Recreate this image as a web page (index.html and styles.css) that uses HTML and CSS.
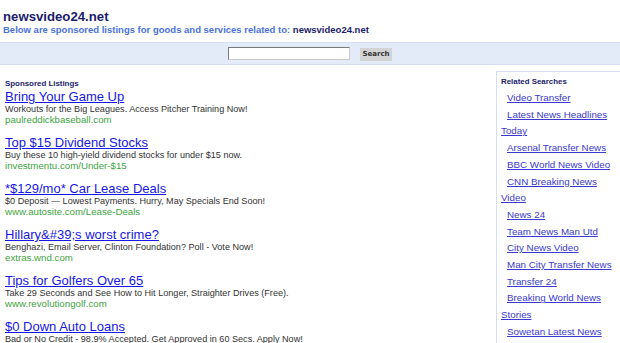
FILE: index.html
```html
<!DOCTYPE html>
<html>
	<head>
		<meta charset="utf-8" />
		<title>newsvideo24.net</title>
	<link rel="stylesheet" href="styles.css">
	</head>
	<body>
	<div class="header">
		<h1>newsvideo24.net</h1>
		<p class="intro">Below are sponsored listings for goods and services related to: <span class="domain">newsvideo24.net</span></p>
	</div>
	<div class="searchbar">
		<input type="text" class="query">
		<button class="go">Search</button>
	</div>
	<div class="main">
		<div class="listings">
			<div class="heading">Sponsored Listings</div>
			<div class="ad">
				<a href="#">Bring Your Game Up</a>
				<div class="desc">Workouts for the Big Leagues. Access Pitcher Training Now!</div>
				<div class="url">paulreddickbaseball.com</div>
			</div>
			<div class="ad">
				<a href="#">Top $15 Dividend Stocks</a>
				<div class="desc">Buy these 10 high-yield dividend stocks for under $15 now.</div>
				<div class="url">investmentu.com/Under-$15</div>
			</div>
			<div class="ad">
				<a href="#">*$129/mo* Car Lease Deals</a>
				<div class="desc">$0 Deposit &mdash; Lowest Payments. Hurry, May Specials End Soon!</div>
				<div class="url">www.autosite.com/Lease-Deals</div>
			</div>
			<div class="ad">
				<a href="#">Hillary&amp;#39;s worst crime?</a>
				<div class="desc">Benghazi, Email Server, Clinton Foundation? Poll - Vote Now!</div>
				<div class="url">extras.wnd.com</div>
			</div>
			<div class="ad">
				<a href="#">Tips for Golfers Over 65</a>
				<div class="desc">Take 29 Seconds and See How to Hit Longer, Straighter Drives (Free).</div>
				<div class="url">www.revolutiongolf.com</div>
			</div>
			<div class="ad">
				<a href="#">$0 Down Auto Loans</a>
				<div class="desc">Bad or No Credit - 98.9% Accepted. Get Approved in 60 Secs. Apply Now!</div>
				<div class="url">www.autoloans.com</div>
			</div>
		</div>
		<div class="related">
			<div class="heading">Related Searches</div>
			<a class="sub" href="#">Video Transfer</a>
			<a class="sub" href="#">Latest News Headlines</a>
			<a class="cat" href="#">Today</a>
			<a class="sub" href="#">Arsenal Transfer News</a>
			<a class="sub" href="#">BBC World News Video</a>
			<a class="sub" href="#">CNN Breaking News</a>
			<a class="cat" href="#">Video</a>
			<a class="sub" href="#">News 24</a>
			<a class="sub" href="#">Team News Man Utd</a>
			<a class="sub" href="#">City News Video</a>
			<a class="sub" href="#">Man City Transfer News</a>
			<a class="sub" href="#">Transfer 24</a>
			<a class="sub" href="#">Breaking World News</a>
			<a class="cat" href="#">Stories</a>
			<a class="sub" href="#">Sowetan Latest News</a>
		</div>
	</div>
	</body>
</html>
```

FILE: styles.css
```css
body{
	margin: 0;
	font-family: "Liberation Sans", Arial, sans-serif;
	background: #fff;
	overflow: hidden;
}
.header{
	padding: 10px 0 0 3px;
	height: 32px;
}
h1{
	margin: 0;
	font-size: 13.2px;
	line-height: 14px;
	color: #1c1c6a;
}
.intro{
	margin: 0;
	font-size: 9.5px;
	font-weight: bold;
	line-height: 12px;
	color: #4b72de;
}
.domain{
	color: #1c1c6a;
}
.searchbar{
	height: 21px;
	background: #e4ebf8;
	border-top: 1px solid #d3def3;
	border-bottom: 1px solid #d3def3;
	display: flex;
	justify-content: center;
	align-items: center;
	gap: 10px;
}
.query{
	width: 118px;
	height: 9px;
	padding: 1px;
	margin: 0;
	border: 1px solid #777;
	border-right-color: #ccc;
	border-bottom-color: #ccc;
	background: #fff;
}
.go{
	width: 32px;
	height: 13px;
	padding: 0;
	margin: 1px 0 0 0;
	border: 0;
	background: #d4d4d4;
	font-family: "DejaVu Sans", sans-serif;
	font-size: 7px;
	font-weight: bold;
	color: #333;
}
.main{
	display: flex;
	padding-top: 6px;
}
.listings{
	flex: 1;
	padding: 8px 0 0 5px;
}
.heading{
	font-size: 7.9px;
	font-weight: bold;
	color: #1c1c6a;
	line-height: 10px;
}
.ad{
	margin-bottom: 11px;
}
.ad a{
	display: block;
	font-size: 13px;
	line-height: 14px;
	color: #1717e6;
	margin-top: 1px;
}
.desc{
	font-size: 9.1px;
	line-height: 11px;
	color: #333;
}
.url{
	font-size: 9.7px;
	line-height: 10px;
	color: #3fa33f;
}
.related{
	width: 119px;
	padding: 5px 0 0 4px;
	border-left: 1px solid #d3def3;
	border-top: 1px solid #d3def3;
}
.related .heading{
	margin-bottom: 3px;
}
.related a{
	display: block;
	font-size: 9.8px;
	line-height: 16.7px;
	color: #3a3ad0;
	white-space: nowrap;
}
.related a.sub{
	padding-left: 6px;
}
```
